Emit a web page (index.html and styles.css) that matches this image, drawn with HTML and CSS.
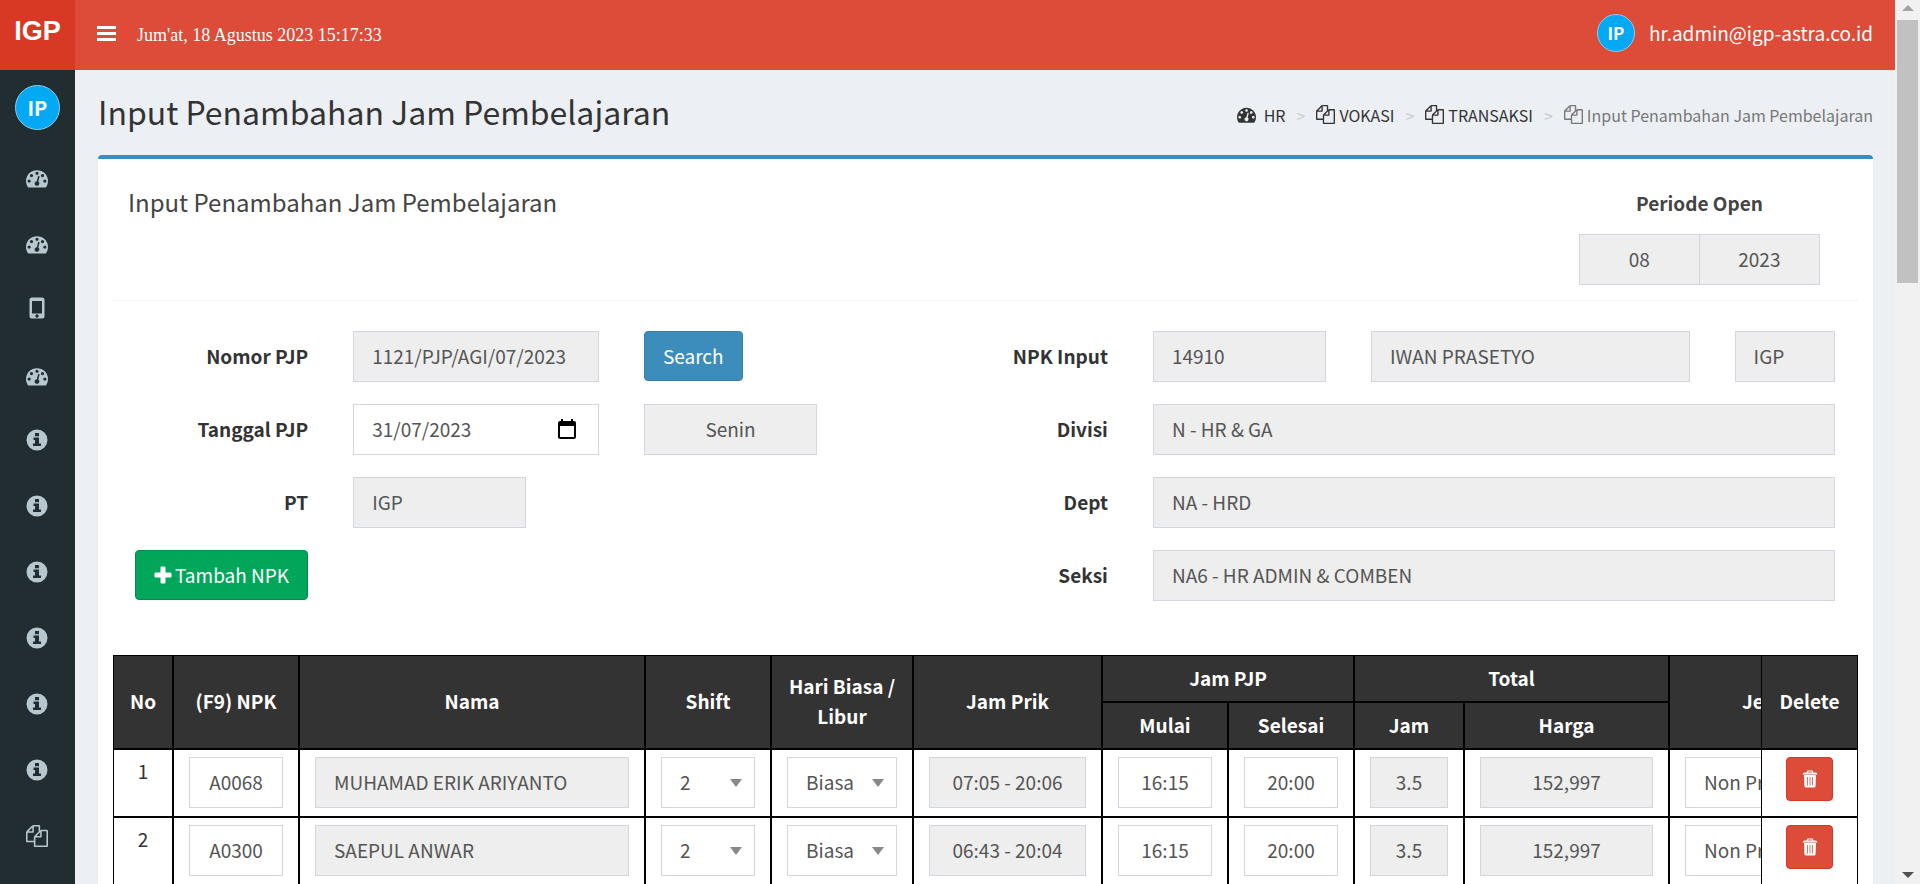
FILE: index.html
```html
<!DOCTYPE html>
<html lang="id">
<head>
<meta charset="utf-8">
<meta name="viewport" content="width=device-width, initial-scale=1">
<title>Input Penambahan Jam Pembelajaran</title>
<link rel="stylesheet" href="styles.css">
</head>
<body>
<svg class="defs" aria-hidden="true">
  <symbol id="i-dash" viewBox="0 0 1792 1792"><path d="M384 1152q0-53-37.5-90.5t-90.5-37.5-90.5 37.5-37.5 90.5 37.5 90.5 90.5 37.5 90.5-37.5 37.5-90.5zm192-448q0-53-37.5-90.5t-90.5-37.5-90.5 37.5-37.5 90.5 37.5 90.5 90.5 37.5 90.5-37.5 37.5-90.5zm428 481l101-382q6-26-7.5-48.5t-38.5-29.5-48 6.5-30 39.5l-101 382q-60 5-107 43.5t-63 98.5q-20 77 20 146t117 89 146-20 89-117q16-60-6-117t-72-91zm660-33q0-53-37.5-90.5t-90.5-37.5-90.5 37.5-37.5 90.5 37.5 90.5 90.5 37.5 90.5-37.5 37.5-90.5zm-640-640q0-53-37.5-90.5t-90.5-37.5-90.5 37.5-37.5 90.5 37.5 90.5 90.5 37.5 90.5-37.5 37.5-90.5zm448 192q0-53-37.5-90.5t-90.5-37.5-90.5 37.5-37.5 90.5 37.5 90.5 90.5 37.5 90.5-37.5 37.5-90.5zm320 448q0 261-141 483-19 29-54 29h-1402q-35 0-54-29-141-221-141-483 0-182 71-348t191-286 286-191 348-71 348 71 286 191 191 286 71 348z"/></symbol>
  <symbol id="i-files" viewBox="0 0 1792 1792"><path d="M1696 384q40 0 68 28t28 68v1216q0 40-28 68t-68 28h-960q-40 0-68-28t-28-68v-288h-544q-40 0-68-28t-28-68v-672q0-40 20-88t48-76l408-408q28-28 76-48t88-20h416q40 0 68 28t28 68v328q68-40 128-40h416zm-544 213l-299 299h299v-299zm-640-384l-299 299h299v-299zm196 647l316-316v-416h-384v416q0 40-28 68t-68 28h-416v640h512v-256q0-40 20-88t48-76zm956 804v-1152h-384v416q0 40-28 68t-68 28h-416v640h896z"/></symbol>
  <symbol id="i-info" viewBox="0 0 22 22"><path fill-rule="evenodd" d="M11 .5a10.5 10.5 0 1 0 0 21a10.5 10.5 0 1 0 0-21zM9 4h4v3.200H9zM7.500 8.500H13v6h2V17H7v-2.500h2v-3.500H7.500z"/></symbol>
  <symbol id="i-phone" viewBox="0 0 22 22"><path fill-rule="evenodd" d="M6 .5h10q2.500 0 2.500 2.500v16.500q0 2-2 2h-11q-2 0-2-2v-16.500q0-2.500 2.500-2.500zM6 4v12.500h10v-12.500zM11 17.300a1.700 1.700 0 1 0 .01 0z"/></symbol>
  <symbol id="i-trash" viewBox="0 0 16 18"><path fill-rule="evenodd" d="M6 .5h4q1.200 0 1.200 1.200v.8h2.300q1.500 0 2 2h-15q.5-2 2-2h2.300v-.8q0-1.200 1.200-1.200zM6.200 1.600v.9h3.600v-.9zM2 5h12l-.4 11q-.1 1.500-1.500 1.500h-8.200q-1.400 0-1.500-1.500zM5 7v8.500h.8v-8.500zM7.600 7v8.500h.8v-8.500zM10.200 7v8.500h.8v-8.500z"/></symbol>
  <symbol id="i-plus" viewBox="0 0 18 18"><path d="M7.500.5h3q1 0 1 1v5h5q1 0 1 1v3q0 1-1 1h-5v5q0 1-1 1h-3q-1 0-1-1v-5h-5q-1 0-1-1v-3q0-1 1-1h5v-5q0-1 1-1z"/></symbol>
  <symbol id="i-cal" viewBox="0 0 18 20"><path fill-rule="evenodd" d="M3 0h2v2h8V0h2v2h1q2 0 2 2v14q0 2-2 2H2q-2 0-2-2V4q0-2 2-2h1zM2 7v11h14V7z"/></symbol>
</svg>
<div class="shell">
  <div class="app">
    <header class="topbar">
      <a class="logo" href="#">IGP</a>
      <button class="burger" type="button" aria-label="Menu"><span></span><span></span><span></span></button>
      <span class="clock">Jum'at, 18 Agustus 2023 15:17:33</span>
      <a class="user" href="#"><span class="avatar avatar-sm">IP</span>hr.admin@igp-astra.co.id</a>
    </header>
    <div class="middle">
      <nav class="sidebar" aria-label="Menu utama">
        <span class="avatar">IP</span>
        <ul class="menu">
          <li><a href="#" aria-label="Dashboard"><svg class="icon low"><use href="#i-dash"/></svg></a></li>
          <li><a href="#" aria-label="Dashboard"><svg class="icon low"><use href="#i-dash"/></svg></a></li>
          <li><a href="#" aria-label="Mobile"><svg class="icon"><use href="#i-phone"/></svg></a></li>
          <li><a href="#" aria-label="Dashboard"><svg class="icon low"><use href="#i-dash"/></svg></a></li>
          <li><a href="#" aria-label="Info"><svg class="icon"><use href="#i-info"/></svg></a></li>
          <li><a href="#" aria-label="Info"><svg class="icon"><use href="#i-info"/></svg></a></li>
          <li><a href="#" aria-label="Info"><svg class="icon"><use href="#i-info"/></svg></a></li>
          <li><a href="#" aria-label="Info"><svg class="icon"><use href="#i-info"/></svg></a></li>
          <li><a href="#" aria-label="Info"><svg class="icon"><use href="#i-info"/></svg></a></li>
          <li><a href="#" aria-label="Info"><svg class="icon"><use href="#i-info"/></svg></a></li>
          <li><a href="#" aria-label="Dokumen"><svg class="icon"><use href="#i-files"/></svg></a></li>
        </ul>
      </nav>
      <main class="content">
        <div class="page-head">
          <h1>Input Penambahan Jam Pembelajaran</h1>
          <ol class="crumbs">
            <li><a href="#"><svg class="icon-sm gap"><use href="#i-dash"/></svg>HR</a></li>
            <li><a href="#"><svg class="icon-sm"><use href="#i-files"/></svg>VOKASI</a></li>
            <li><a href="#"><svg class="icon-sm"><use href="#i-files"/></svg>TRANSAKSI</a></li>
            <li class="active"><svg class="icon-sm"><use href="#i-files"/></svg>Input Penambahan Jam Pembelajaran</li>
          </ol>
        </div>
        <section class="box">
          <div class="box-head">
            <h2>Input Penambahan Jam Pembelajaran</h2>
            <div class="period">
              <label for="bulan">Periode Open</label>
              <div class="period-fields">
                <input class="field center" id="bulan" value="08" readonly>
                <input class="field center" value="2023" aria-label="Tahun" readonly>
              </div>
            </div>
          </div>
          <form class="form">
            <div class="grid">
              <label class="s3" for="nopjp">Nomor PJP</label>
              <div class="s4"><input class="field" id="nopjp" value="1121/PJP/AGI/07/2023" readonly></div>
              <div class="s5"><button class="btn blue" type="button">Search</button></div>
              <label class="s3" for="tgl">Tanggal PJP</label>
              <div class="s4"><div class="date"><input class="field" id="tgl" value="31/07/2023"><button type="button" aria-label="Pilih tanggal"><svg><use href="#i-cal"/></svg></button></div></div>
              <div class="s3"><input class="field center" value="Senin" aria-label="Hari" readonly></div>
              <label class="s3 start" for="pt">PT</label>
              <div class="s3"><input class="field" id="pt" value="IGP" readonly></div>
              <div class="s3 start"><button class="btn green" type="button"><svg><use href="#i-plus"/></svg>Tambah NPK</button></div>
            </div>
            <div class="grid">
              <label class="s2" for="npk">NPK Input</label>
              <div class="s3"><input class="field" id="npk" value="14910" readonly></div>
              <div class="s5"><input class="field" value="IWAN PRASETYO" aria-label="Nama" readonly></div>
              <div class="s2"><input class="field" value="IGP" aria-label="PT Input" readonly></div>
              <label class="s2" for="divisi">Divisi</label>
              <div class="s10"><input class="field" id="divisi" value="N - HR &amp; GA" readonly></div>
              <label class="s2" for="dept">Dept</label>
              <div class="s10"><input class="field" id="dept" value="NA - HRD" readonly></div>
              <label class="s2" for="seksi">Seksi</label>
              <div class="s10"><input class="field" id="seksi" value="NA6 - HR ADMIN &amp; COMBEN" readonly></div>
            </div>
          </form>
          <div class="scroller">
            <table>
              <colgroup><col class="c-no"><col class="c-time"><col class="c-nama"><col class="c-time"><col class="c-hari"><col class="c-prik"><col class="c-time"><col class="c-time"><col class="c-jam"><col class="c-harga"><col class="c-jenis"><col class="c-del"></colgroup>
              <thead>
                <tr><th rowspan="2">No</th><th rowspan="2">(F9) NPK</th><th rowspan="2">Nama</th><th rowspan="2">Shift</th><th rowspan="2">Hari Biasa / Libur</th><th rowspan="2">Jam Prik</th><th colspan="2">Jam PJP</th><th colspan="2">Total</th><th rowspan="2">Jenis</th><th class="pin" rowspan="2">Delete</th></tr>
                <tr><th>Mulai</th><th>Selesai</th><th>Jam</th><th>Harga</th></tr>
              </thead>
              <tbody>
                <tr>
                  <td>1</td>
                  <td><input class="field center" value="A0068" aria-label="NPK"></td>
                  <td><input class="field" value="MUHAMAD ERIK ARIYANTO" aria-label="Nama" readonly></td>
                  <td><div class="pick"><select class="field" aria-label="Shift"><option>2</option></select></div></td>
                  <td><div class="pick"><select class="field" aria-label="Hari"><option>Biasa</option></select></div></td>
                  <td><input class="field center" value="07:05 - 20:06" aria-label="Jam Prik" readonly></td>
                  <td><input class="field center" value="16:15" aria-label="Mulai"></td>
                  <td><input class="field center" value="20:00" aria-label="Selesai"></td>
                  <td><input class="field center" value="3.5" aria-label="Jam" readonly></td>
                  <td><input class="field center" value="152,997" aria-label="Harga" readonly></td>
                  <td><div class="pick"><select class="field" aria-label="Jenis"><option>Non Produksi</option></select></div></td>
                  <td class="pin"><button class="del" type="button" aria-label="Delete"><svg><use href="#i-trash"/></svg></button></td>
                </tr>
                <tr>
                  <td>2</td>
                  <td><input class="field center" value="A0300" aria-label="NPK"></td>
                  <td><input class="field" value="SAEPUL ANWAR" aria-label="Nama" readonly></td>
                  <td><div class="pick"><select class="field" aria-label="Shift"><option>2</option></select></div></td>
                  <td><div class="pick"><select class="field" aria-label="Hari"><option>Biasa</option></select></div></td>
                  <td><input class="field center" value="06:43 - 20:04" aria-label="Jam Prik" readonly></td>
                  <td><input class="field center" value="16:15" aria-label="Mulai"></td>
                  <td><input class="field center" value="20:00" aria-label="Selesai"></td>
                  <td><input class="field center" value="3.5" aria-label="Jam" readonly></td>
                  <td><input class="field center" value="152,997" aria-label="Harga" readonly></td>
                  <td><div class="pick"><select class="field" aria-label="Jenis"><option>Non Produksi</option></select></div></td>
                  <td class="pin"><button class="del" type="button" aria-label="Delete"><svg><use href="#i-trash"/></svg></button></td>
                </tr>
              </tbody>
            </table>
          </div>
        </section>
      </main>
    </div>
  </div>
  <div class="scrollbar" aria-hidden="true"><span class="arrow up"></span><span class="thumb"></span><span class="arrow down"></span></div>
</div>
</body>
</html>
```

FILE: styles.css
```css
* { box-sizing: border-box; }
body {
  margin: 0;
  font: 19px/30px "Noto Sans CJK SC", "Noto Sans", sans-serif;
  color: #333;
  background: #ecf0f5;
}
a { color: inherit; text-decoration: none; }
button, input, select { font: inherit; }
button { border: 0; padding: 0; background: none; cursor: pointer; }
h1, h2, ul, ol { margin: 0; padding: 0; font-weight: 400; list-style: none; }
svg { fill: currentColor; flex: none; display: block; }
.defs { display: none; }

.shell { display: flex; height: 100vh; overflow: hidden; }
.app { flex: 1; min-width: 0; display: flex; flex-direction: column; }

.topbar { display: flex; align-items: center; height: 70px; flex: none; background: #dd4b39; color: #fff; }
.logo {
  width: 75px; height: 70px; padding-bottom: 8px;
  display: flex; align-items: center; justify-content: center;
  background: #d73925; font: bold 27px "Liberation Sans", Arial, sans-serif;
}
.burger { display: grid; gap: 3px; width: 19px; margin: 0 21px 4px 22px; }
.burger span { height: 3px; background: #fff; }
.clock { font: 18px "Liberation Serif", "Times New Roman", serif; }
.user { display: flex; align-items: center; gap: 14px; margin: 0 22px 4px auto; }
.avatar {
  width: 45px; height: 45px; border-radius: 50%;
  display: flex; align-items: center; justify-content: center;
  background: #03a9f4; border: 1px solid #8ccdee; color: #fff;
  font-size: 20px; font-weight: 700;
}
.avatar-sm { width: 38px; height: 38px; font-size: 17px; }

.middle { flex: 1; min-height: 0; display: flex; }
.sidebar { width: 75px; flex: none; background: #222d32; color: #b8c7ce; padding-top: 15px; overflow: hidden; }
.sidebar .avatar { margin: 0 auto 13px; }
.menu a { display: flex; align-items: center; justify-content: center; height: 66px; padding-right: 1px; }
.icon { width: 22px; height: 22px; }
.low { margin-top: 4px; }

.content { flex: 1; min-width: 0; padding: 20px 22px 0 23px; overflow: hidden; }
.page-head { display: flex; justify-content: space-between; align-items: center; height: 43px; margin-bottom: 22px; }
h1 { font-size: 32px; line-height: 43px; }
.crumbs { display: flex; font-size: 16px; line-height: 24px; padding-top: 6px; }
.crumbs li, .crumbs a { display: flex; align-items: center; }
.crumbs li + li::before { content: ">"; color: #ccc; padding: 0 11px; }
.crumbs .active { color: #777; }
.icon-sm { width: 19px; height: 19px; margin-right: 4px; }
.gap { margin-right: 8px; }

.box { background: #fff; border-top: 4px solid #3c8dbc; border-radius: 4px; padding: 0 15px; box-shadow: 0 1px 1px rgba(0, 0, 0, .1); min-height: 900px; }
.box-head { display: flex; justify-content: space-between; padding: 29px 38px 15px 15px; border-bottom: 1px solid #f4f4f4; color: #444; }
h2 { font-size: 24px; line-height: 28px; }
.period { width: 241px; text-align: center; font-weight: 700; }
.period label { display: block; margin-bottom: 16px; }
.period-fields { display: flex; }
.period-fields .field + .field { border-left: 0; }

.field {
  display: block; width: 100%; height: 51px; min-width: 0;
  padding: 0 18px 2px; border: 1px solid #d2d6de; border-radius: 0;
  background: #fff; color: #555; font-weight: 400; outline: 0;
}
.field:read-only:not(select) { background: #eee; }
.center { text-align: center; padding: 0 0 2px; }

.form { display: flex; padding-top: 30px; }
.grid { flex: 1; min-width: 0; display: grid; grid-template-columns: repeat(12, minmax(0, 1fr)); grid-auto-rows: 51px; row-gap: 22px; }
.grid > * { padding: 0 23px 0 22px; }
.grid label { font-weight: 700; text-align: right; line-height: 50px; }
.s2 { grid-column: span 2; }
.s3 { grid-column: span 3; }
.s4 { grid-column: span 4; }
.s5 { grid-column: span 5; }
.s10 { grid-column: span 10; }
.start { grid-column: 1 / span 3; }
.btn { height: 50px; padding: 0 18px; border: 1px solid; border-radius: 4px; color: #fff; white-space: nowrap; }
.blue { background: #3c8dbc; border-color: #367fa9; }
.green { display: flex; align-items: center; justify-content: center; gap: 3px; width: 100%; background: #00a65a; border-color: #008d4c; }
.green svg { width: 18px; height: 18px; }
.date { position: relative; }
.date button { position: absolute; right: 23px; top: 15px; color: #000; }
.date svg { width: 18px; height: 20px; }

.scroller { margin-top: 54px; overflow: hidden; }
table { width: 1848px; table-layout: fixed; border-collapse: separate; border-spacing: 0; }
.c-no { width: 60px; }
.c-time { width: 126px; }
.c-nama { width: 346px; }
.c-hari { width: 142px; }
.c-prik { width: 189px; }
.c-jam { width: 110px; }
.c-harga { width: 205px; }
.c-jenis { width: 195px; }
.c-del { width: 97px; }
th, td { border: 1px solid #000; text-align: center; }
th { height: 47px; padding: 6px 10px 8px; background: #333; color: #fff; font-weight: 700; }
td { height: 68px; padding: 7px 15px 8px; background: #fff; vertical-align: top; line-height: 28px; }
.pin { position: sticky; right: 0; z-index: 1; }
.pick { position: relative; }
.pick select { appearance: none; padding-left: 18px; padding-right: 30px; }
.pick::after {
  content: ""; position: absolute; right: 13px; top: 22px; pointer-events: none;
  border: 6px solid transparent; border-top: 8px solid #888; border-bottom: 0;
}
.del { display: inline-flex; align-items: center; justify-content: center; width: 47px; height: 44px; background: #dd4b39; border: 1px solid #d73925; border-radius: 4px; color: #fff; }
.del svg { width: 16px; height: 18px; }

.scrollbar { width: 25px; flex: none; display: flex; flex-direction: column; align-items: center; background: #f1f1f1; }
.arrow { border: 6px solid transparent; }
.up { border-top: 0; border-bottom: 6px solid #a3a3a3; margin: 5px 0 9px; }
.thumb { width: 21px; height: 263px; background: #c1c1c1; }
.down { border-bottom: 0; border-top: 6px solid #505050; margin: auto 0 6px; }
```
